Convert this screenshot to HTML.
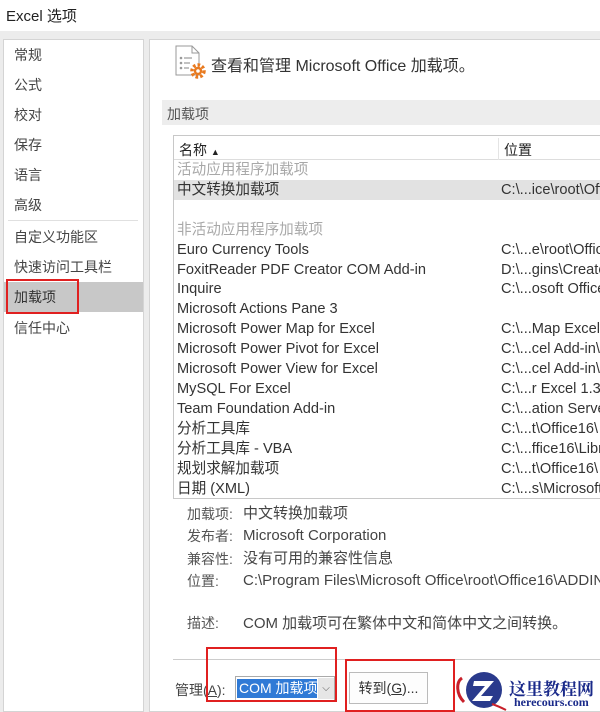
<!DOCTYPE html>
<html><head><meta charset="utf-8"><style>
*{margin:0;padding:0;box-sizing:border-box}
body{width:600px;height:712px;overflow:hidden;background:#fff;font-family:"Liberation Sans","Noto Sans CJK SC",sans-serif;color:#333;font-size:14px;position:relative}
.a{position:absolute;white-space:nowrap}
.g{color:#a8a8a8}
</style></head><body>
<div class="a" style="left:6px;top:5px;font-size:15px;color:#222">Excel 选项</div>
<div class="a" style="left:0;top:31px;width:600px;height:681px;background:#ececec"></div>
<div class="a" style="left:3px;top:39px;width:141px;height:673px;background:#fff;border:1px solid #d4d4d4"></div>
<div class="a" style="left:149px;top:39px;width:451px;height:673px;background:#fff;border:1px solid #d4d4d4;border-right:none"></div>
<div class="a" style="left:14px;top:40px;line-height:30px;color:#444">常规<br>公式<br>校对<br>保存<br>语言<br>高级</div>
<div class="a" style="left:8px;top:220px;width:130px;height:1px;background:#e0e0e0"></div>
<div class="a" style="left:14px;top:222px;line-height:30px;color:#444">自定义功能区<br>快速访问工具栏</div>
<div class="a" style="left:4px;top:282px;width:139px;height:30px;background:#c8c8c8"></div>
<div class="a" style="left:14px;top:287px;color:#333">加载项</div>
<div class="a" style="left:6px;top:279px;width:73px;height:35px;border:2px solid #e02020"></div>
<div class="a" style="left:14px;top:318px;color:#444">信任中心</div>
<svg class="a" style="left:174px;top:44px" width="34" height="36" viewBox="0 0 34 36"><path d="M2 2h16l7 7v22H2z" fill="#fff" stroke="#999"/><path d="M18 2v7h7" fill="none" stroke="#999"/><g fill="#999"><circle cx="7" cy="14" r="1.3"/><circle cx="7" cy="19" r="1.3"/><circle cx="7" cy="24" r="1.3"/><rect x="10" y="13.4" width="8" height="1.2"/><rect x="10" y="18.4" width="6" height="1.2"/><rect x="10" y="23.4" width="5" height="1.2"/></g><circle cx="24" cy="27" r="6" fill="none" stroke="#e87a20" stroke-width="3.5" stroke-dasharray="2.6 2"/><circle cx="24" cy="27" r="4.2" fill="#e87a20"/><circle cx="24" cy="27" r="1.8" fill="#fff"/></svg>
<div class="a" style="left:211px;top:52px;font-size:16px;color:#333">查看和管理 Microsoft Office 加载项。</div>
<div class="a" style="left:162px;top:100px;width:438px;height:25px;background:#ededed"></div>
<div class="a" style="left:167px;top:104px;color:#555">加载项</div>
<div class="a" style="left:173px;top:135px;width:427px;height:364px;border:1px solid #c8c8c8;border-right:none"></div>
<div class="a" style="left:174px;top:136px;width:426px;height:24px;border-bottom:1px solid #ddd"></div>
<div class="a" style="left:498px;top:138px;width:1px;height:22px;background:#e4e4e4"></div>
<div class="a" style="left:179px;top:140px;color:#222">名称 <span style="font-size:9px">▲</span></div>
<div class="a" style="left:504px;top:140px;color:#222">位置</div>
<div class="a" style="left:174px;top:180px;width:426px;height:20px;background:#e2e2e2"></div>
<div class="a" style="left:177px;top:161px;line-height:19.9px;font-size:14.6px">
<span class="g">活动应用程序加载项</span><br>中文转换加载项<br>&nbsp;<br><span class="g">非活动应用程序加载项</span><br>Euro Currency Tools<br>FoxitReader PDF Creator COM Add-in<br>Inquire<br>Microsoft Actions Pane 3<br>Microsoft Power Map for Excel<br>Microsoft Power Pivot for Excel<br>Microsoft Power View for Excel<br>MySQL For Excel<br>Team Foundation Add-in<br>分析工具库<br>分析工具库 - VBA<br>规划求解加载项<br>日期 (XML)</div>
<div class="a" style="left:501px;top:161px;line-height:19.9px;font-size:14.6px">&nbsp;<br>C:\...ice\root\Office<br>&nbsp;<br>&nbsp;<br>C:\...e\root\Office<br>D:\...gins\Creator<br>C:\...osoft Office<br>&nbsp;<br>C:\...Map Excel<br>C:\...cel Add-in\<br>C:\...cel Add-in\<br>C:\...r Excel 1.3\<br>C:\...ation Server<br>C:\...t\Office16\<br>C:\...ffice16\Libr<br>C:\...t\Office16\<br>C:\...s\Microsoft</div>
<div class="a" style="left:187px;top:503px;line-height:22.3px;color:#555">加载项:<br>发布者:<br>兼容性:<br>位置:</div>
<div class="a" style="left:243px;top:503px;line-height:22.3px;color:#444;font-size:15px">中文转换加载项<br>Microsoft Corporation<br>没有可用的兼容性信息<br>C:\Program Files\Microsoft Office\root\Office16\ADDINS</div>
<div class="a" style="left:187px;top:613px;color:#555">描述:</div>
<div class="a" style="left:243px;top:612px;color:#444;font-size:15px">COM 加载项可在繁体中文和简体中文之间转换。</div>
<div class="a" style="left:173px;top:659px;width:427px;height:1px;background:#ccc"></div>
<div class="a" style="left:175px;top:680px;color:#444">管理(<u>A</u>):</div>
<div class="a" style="left:235px;top:676px;width:100px;height:25px;border:1px solid #aaa;background:#fff"></div>
<div class="a" style="left:237px;top:679px;width:80px;height:19px;background:#2f7ad6;color:#fff;padding-left:2px;line-height:19px">COM 加载项</div>
<div class="a" style="left:318px;top:678px;width:16px;height:21px;background:#e6e6e6;font-size:10px;line-height:21px;text-align:center;color:#555">⌵</div>
<div class="a" style="left:349px;top:672px;width:79px;height:32px;border:1px solid #bbb;background:#fdfdfd;text-align:center;line-height:30px;color:#333">转到(<u>G</u>)...</div>
<div class="a" style="left:206px;top:647px;width:131px;height:55px;border:2px solid #e02020"></div>
<div class="a" style="left:345px;top:659px;width:110px;height:53px;border:2px solid #e02020"></div>
<svg class="a" style="left:452px;top:668px" width="56" height="44" viewBox="0 0 56 44"><path d="M10 10C4 14 4 26 12 34" fill="none" stroke="#c8202a" stroke-width="3"/><circle cx="32" cy="22" r="18" fill="#2a3a8c"/><path d="M22 13h20l-13 15h12l-3 5H20l13-15H21z" fill="#fff"/><path d="M40 36c6 2 10 4 14 6" stroke="#c8202a" stroke-width="2" fill="none"/></svg>
<div class="a" style="left:509px;top:675px;font-size:17px;font-weight:bold;color:#1a2a8a;font-family:'Noto Serif CJK SC',serif">这里教程网</div>
<div class="a" style="left:514px;top:695px;font-size:12px;font-weight:bold;color:#1a2a8a;font-family:'Liberation Serif',serif">herecours.com</div>
</body></html>
